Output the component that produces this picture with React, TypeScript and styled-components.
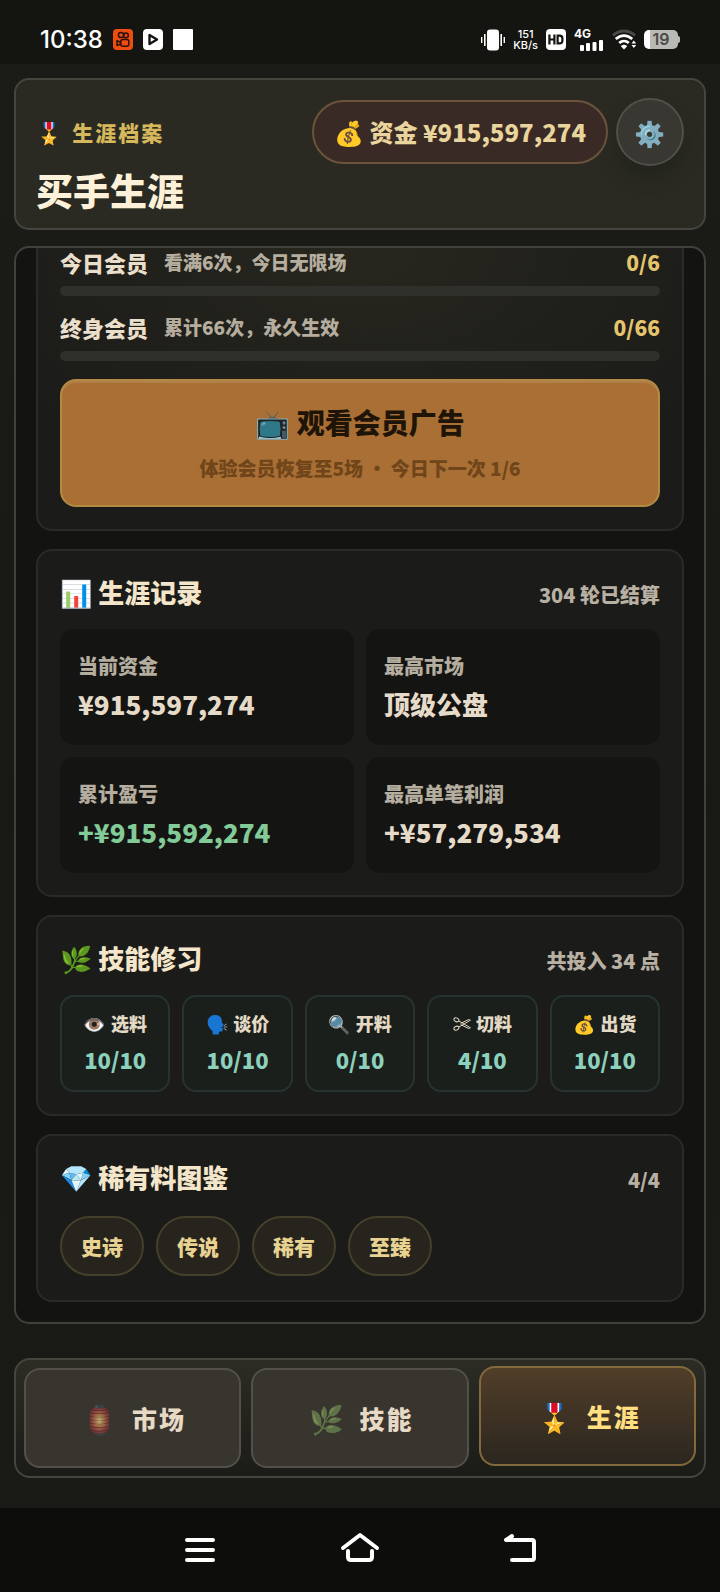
import React from "react";
import styled, { createGlobalStyle, css } from "styled-components";

const GlobalStyle = createGlobalStyle`
  *, *::before, *::after { box-sizing: border-box; }
  body {
    margin: 0;
    background: #191a16;
    color: #e9dfc9;
    font-family: "Noto Sans CJK SC", "Noto Color Emoji", sans-serif;
    font-weight: 900;
  }
  h1, h2, p, dl, dt, dd, ul { margin: 0; padding: 0; }
  h1, h2 { font-weight: 900; }
  button { font: inherit; color: inherit; cursor: pointer; }
`;

const Screen = styled.div`
  min-height: 100vh;
  display: flex;
  flex-direction: column;
  background: linear-gradient(180deg, #1b1b18 0%, #181914 50%, #1a1b17 100%);
`;

/* ---------- system status bar ---------- */

const StatusBar = styled.div`
  display: flex;
  justify-content: space-between;
  align-items: center;
  height: 64px;
  padding: 15px 42px 0 40px;
  background: #141510;
  color: #ffffff;
  font-family: Inter, sans-serif;
  font-weight: 500;
`;

const StatusGroup = styled.div<{ $gap: number }>`
  display: flex;
  align-items: center;
  gap: ${(p) => p.$gap}px;
`;

const Clock = styled.span`
  font-size: 24px;
  line-height: 28px;
`;

const NetSpeed = styled.span`
  display: grid;
  justify-items: center;
  font-size: 11px;
  line-height: 11px;
`;

/* ---------- header ---------- */

const Header = styled.header`
  display: flex;
  justify-content: space-between;
  align-items: flex-start;
  margin: 14px 14px 0;
  padding: 18px 20px 14px;
  border: 2px solid #45453e;
  border-radius: 15px;
  background: #2a2a23;
`;

const Eyebrow = styled.p`
  display: flex;
  align-items: center;
  gap: 8px;
  height: 36px;
  margin-top: 16px;
  color: #d6b85c;
  font-size: 21px;
  line-height: 36px;
  letter-spacing: 2px;
`;

const Title = styled.h1`
  color: #fdf1da;
  font-size: 37px;
  line-height: 48px;
  margin-top: 16px;
`;

const HeaderActions = styled.div`
  display: flex;
  align-items: center;
  gap: 8px;
`;

const Funds = styled.div`
  height: 64px;
  padding: 0 20px;
  border: 2px solid #6b543c;
  border-radius: 32px;
  background: #3a2a25;
  color: #e8d49c;
  font-size: 24px;
  line-height: 60px;
  white-space: nowrap;
`;

const SettingsButton = styled.button`
  display: grid;
  place-items: center;
  width: 68px;
  height: 68px;
  padding: 0;
  border: 2px solid #504f49;
  border-radius: 50%;
  background: #393731;
  box-shadow: 0 12px 20px rgba(0, 0, 0, 0.16);
  font-size: 25px;
  line-height: 28px;
`;

/* ---------- scrolling panel and its cards ---------- */

const Panel = styled.main`
  display: flex;
  flex-direction: column;
  gap: 18px;
  margin: 16px 14px 0;
  padding: 0 20px 20px;
  border: 2px solid #40413a;
  border-radius: 15px;
  overflow: hidden;
  background: #131311;
`;

const Card = styled.section<{ $clipped?: boolean }>`
  padding: 22px;
  border: 2px solid #2a2a28;
  border-radius: 16px;
  background: #1b1b19;
  ${(p) =>
    p.$clipped &&
    css`
      display: grid;
      gap: 18px;
      padding-top: 0;
      border-top: 0;
      border-radius: 0 0 16px 16px;
      background: radial-gradient(ellipse 64% 90% at 50% 0%, #27261e 0%, #1b1b19 100%);
    `}
`;

const CardHead = styled.div`
  display: flex;
  justify-content: space-between;
  align-items: flex-end;
  height: 40px;
  margin-bottom: 16px;
`;

const CardTitle = styled.h2`
  color: #f4e6cb;
  font-size: 26px;
  line-height: 42px;
`;

const CardNote = styled.span`
  color: #b8b0a2;
  font-size: 20px;
  line-height: 36px;
`;

const Goal = styled.div`
  display: grid;
  gap: 11px;
`;

const GoalRow = styled.div`
  display: flex;
  align-items: center;
  gap: 16px;
  height: 26px;
  line-height: 26px;

  ${Goal}:first-child & {
    height: 27px;
  }
`;

const GoalName = styled.span`
  color: #e9dfcb;
  font-size: 22px;
`;

const GoalHint = styled.span`
  flex: 1;
  color: #b5ad9e;
  font-size: 19px;
`;

const GoalCount = styled.span`
  color: #e5c46e;
  font-size: 21px;
`;

const Track = styled.div`
  height: 10px;
  border-radius: 5px;
  background: #2f2f2b;
`;

const AdButton = styled.button`
  display: grid;
  align-content: center;
  justify-items: center;
  gap: 12px;
  width: 100%;
  height: 128px;
  padding: 0 0 3px;
  border: 2px solid #b38a42;
  border-radius: 16px;
  background: #a96f35;
  box-shadow: inset 0 2px 0 #b17f4a;
`;

const AdTitle = styled.span`
  color: #1f1408;
  font-size: 28px;
  line-height: 40px;
`;

const AdHint = styled.span`
  color: #6f4519;
  font-size: 19px;
  line-height: 28px;
`;

const StatGrid = styled.dl`
  display: grid;
  grid-template-columns: 1fr 1fr;
  gap: 12px;
`;

const Stat = styled.div`
  display: grid;
  align-content: start;
  gap: 7px;
  height: 116px;
  padding: 23px 18px 0;
  border-radius: 14px;
  background: #141412;
`;

const StatLabel = styled.dt`
  color: #b5ad9f;
  font-size: 20px;
  line-height: 28px;
`;

const StatValue = styled.dd<{ $gain?: boolean }>`
  color: ${(p) => (p.$gain ? "#82cb98" : "#e5dbc8")};
  font-size: 26px;
  line-height: 34px;
`;

const SkillGrid = styled.dl`
  display: grid;
  grid-template-columns: repeat(5, 1fr);
  gap: 12px;
`;

const Skill = styled.div`
  display: grid;
  align-content: start;
  justify-items: center;
  gap: 7px;
  height: 97px;
  padding-top: 12px;
  border: 2px solid #263330;
  border-radius: 14px;
  background: #1a1f1c;
`;

const SkillName = styled.dt`
  display: flex;
  align-items: center;
  gap: 5px;
  color: #e3d9c5;
  font-size: 18px;
  line-height: 28px;
`;

const SkillLevel = styled.dd`
  color: #8dd0bc;
  font-size: 22px;
  line-height: 30px;
`;

const RarityList = styled.ul`
  display: flex;
  flex-wrap: wrap;
  gap: 12px;
  padding: 2px 0;
  list-style: none;
`;

const Rarity = styled.li`
  height: 60px;
  padding: 0 19px;
  border: 2px solid #45402c;
  border-radius: 30px;
  background: #26241c;
  color: #e9d393;
  font-size: 21px;
  line-height: 56px;
`;

/* ---------- tab bar ---------- */

const TabBar = styled.nav`
  display: grid;
  grid-template-columns: repeat(3, 1fr);
  gap: 10px;
  margin: 34px 14px 30px;
  padding: 8px;
  border: 2px solid #45453e;
  border-radius: 16px;
  background: linear-gradient(180deg, #2c2c25 0%, #1b1b18 100%);
`;

const Tab = styled.button<{ $active?: boolean }>`
  display: flex;
  align-items: center;
  justify-content: center;
  gap: 15px;
  height: 100px;
  padding: 0 0 0 3px;
  border: 2px solid #53504a;
  border-radius: 16px;
  background: #38342e;
  color: #e6dac6;
  font-size: 25px;
  letter-spacing: 2px;
  ${(p) =>
    p.$active &&
    css`
      border-color: #83693b;
      background: linear-gradient(180deg, #513e29 0%, #2b261e 100%);
      color: #ffdf82;
      transform: translateY(-2px);
    `}
`;

const TabIcon = styled.span<{ $dim?: boolean }>`
  font-size: 28px;
  line-height: 34px;
  letter-spacing: 0;
  opacity: ${(p) => (p.$dim ? 0.7 : 1)};
  filter: ${(p) => (p.$dim ? "grayscale(0.5)" : "none")};
`;

/* ---------- system navigation ---------- */

const SystemNav = styled.div`
  display: flex;
  justify-content: center;
  align-items: center;
  gap: 120px;
  height: 84px;
  margin-top: auto;
  background: #0d0d0b;
`;

const SystemButton = styled.button`
  display: grid;
  width: 40px;
  height: 40px;
  padding: 0;
  border: 0;
  background: none;
  color: #ffffff;
`;

const KuaishouIcon = () => (
  <svg width="20" height="21" viewBox="0 0 20 21" fill="none" aria-hidden="true">
    <rect width="20" height="21" rx="4" fill="#ee4d12" />
    <g stroke="#2a1008" strokeWidth="1.5">
      <circle cx="8" cy="6" r="2.6" />
      <circle cx="13" cy="6.4" r="2.3" />
      <rect x="7.8" y="10.6" width="8" height="6.6" rx="2" />
      <path d="M7.6 13.2 4 11.6v5l3.6-1.6" strokeLinejoin="round" />
    </g>
  </svg>
);

const PlayIcon = () => (
  <svg width="20" height="21" viewBox="0 0 20 21" aria-hidden="true">
    <rect width="20" height="21" rx="4" fill="#fff" />
    <path d="M6.500 6v9l7.500-4.500z" fill="none" stroke="#141510" strokeWidth="2.400" strokeLinejoin="round" />
  </svg>
);

const SquareIcon = () => (
  <svg width="20" height="21" viewBox="0 0 20 21" aria-hidden="true">
    <rect width="20" height="21" rx="1" fill="#fff" />
  </svg>
);

const VibrateIcon = () => (
  <svg width="24" height="22" viewBox="0 0 24 22" fill="#fff" aria-hidden="true">
    <rect x="6" y="0.500" width="12" height="21" rx="3" />
    <path d="M3 5h1.600v12H3zM0 8h1.400v6H0zM19.400 5H21v12h-1.600zM22.600 8H24v6h-1.400z" />
  </svg>
);

const HdIcon = () => (
  <svg width="20" height="21" viewBox="0 0 20 21" fill="none" aria-hidden="true">
    <rect width="20" height="21" rx="4" fill="#fff" />
    <path
      d="M3.400 5.500v10M8.400 5.500v10M3.400 10.500h5M11.600 6.600v7.800h2c1.800 0 2.800-1 2.800-2.600V9.200c0-1.600-1-2.600-2.800-2.600z"
      stroke="#141510"
      strokeWidth="2.200"
    />
  </svg>
);

const SignalLabel = styled.span`
  display: grid;
  font-size: 12px;
  line-height: 10px;
  font-weight: 700;
`;

const SignalBars = () => (
  <svg width="30" height="12" viewBox="0 0 30 12" fill="#fff" aria-hidden="true">
    <rect x="6" y="6" width="4" height="6" rx="1" />
    <rect x="12" y="4" width="4" height="8" rx="1" />
    <rect x="18.500" y="3" width="4" height="9" rx="1" />
    <rect x="25" y="1" width="4" height="11" rx="1" />
  </svg>
);

const WifiIcon = () => (
  <svg width="24" height="21" viewBox="0 0 24 21" fill="none" strokeWidth="2.800" aria-hidden="true">
    <path d="M1 6.500C7.500.500 16.500.500 23 6.500" stroke="#4a4a47" />
    <path d="M3.800 10C8.800 5.400 15.200 5.400 20.200 10" stroke="#fff" />
    <path d="M7.200 14C10 11.400 14 11.400 16.800 14" stroke="#fff" />
    <path d="M8.800 17.200c1.800-1.800 4.600-1.800 6.400 0L12 20.500z" fill="#fff" />
    <path d="M19.500 14.500l2.300-3 2.300 3zM19.500 16l2.300 3 2.300-3z" fill="#fff" />
  </svg>
);

const Battery = styled.span`
  display: block;
  position: relative;
  width: 34px;
  height: 19px;
  border-radius: 5px;
  background: linear-gradient(90deg, #ffffff 19%, #b9b9b6 19%);
  color: #4a4a47;
  font-size: 16px;
  line-height: 19px;
  font-weight: 600;
  text-align: center;
  &::after {
    content: "";
    position: absolute;
    right: -2px;
    top: 6px;
    width: 2px;
    height: 7px;
    border-radius: 0 2px 2px 0;
    background: #b9b9b6;
  }
`;

const ScissorsIcon = () => (
  <svg width="18" height="14" viewBox="0 0 18 14" fill="none" stroke="#e3d9c5" strokeWidth="1" aria-hidden="true">
    <ellipse cx="3.400" cy="2.800" rx="2.600" ry="1.800" transform="rotate(25 3.4 2.8)" />
    <ellipse cx="3.400" cy="11.200" rx="2.600" ry="1.800" transform="rotate(-25 3.4 11.2)" />
    <path d="M5.600 3.800 17.400 10.800 15.500 11.400 7.600 7.600M5.600 10.200 17.400 3.200 15.500 2.600 7.600 6.400" strokeLinejoin="round" />
  </svg>
);

const goals = [
  { name: "今日会员", hint: "看满6次，今日无限场", value: 0, max: 6 },
  { name: "终身会员", hint: "累计66次，永久生效", value: 0, max: 66 },
];

const stats = [
  { label: "当前资金", value: "¥915,597,274" },
  { label: "最高市场", value: "顶级公盘" },
  { label: "累计盈亏", value: "+¥915,592,274", gain: true },
  { label: "最高单笔利润", value: "+¥57,279,534" },
];

const skills: { icon: React.ReactNode; name: string; level: number }[] = [
  { icon: "👁️", name: "选料", level: 10 },
  { icon: "🗣️", name: "谈价", level: 10 },
  { icon: "🔍", name: "开料", level: 0 },
  { icon: <ScissorsIcon />, name: "切料", level: 4 },
  { icon: "💰", name: "出货", level: 10 },
];

const rarities = ["史诗", "传说", "稀有", "至臻"];

const tabs = [
  { icon: "🏮", name: "市场" },
  { icon: "🌿", name: "技能" },
  { icon: "🎖️", name: "生涯", active: true },
];

export default function App() {
  return (
    <Screen>
      <GlobalStyle />
      <StatusBar>
        <StatusGroup $gap={10}>
          <Clock>10:38</Clock>
          <KuaishouIcon />
          <PlayIcon />
          <SquareIcon />
        </StatusGroup>
        <StatusGroup $gap={8}>
          <VibrateIcon />
          <NetSpeed>
            <span>151</span>
            <span>KB/s</span>
          </NetSpeed>
          <HdIcon />
          <SignalLabel>
            4G
            <SignalBars />
          </SignalLabel>
          <WifiIcon />
          <Battery>19</Battery>
        </StatusGroup>
      </StatusBar>

      <Header>
        <div>
          <Eyebrow>
            <span>🎖️</span>
            <span>生涯档案</span>
          </Eyebrow>
          <Title>买手生涯</Title>
        </div>
        <HeaderActions>
          <Funds>💰 资金 ¥915,597,274</Funds>
          <SettingsButton aria-label="设置">⚙️</SettingsButton>
        </HeaderActions>
      </Header>

      <Panel>
        <Card $clipped>
          {goals.map((g) => (
            <Goal key={g.name}>
              <GoalRow>
                <GoalName>{g.name}</GoalName>
                <GoalHint>{g.hint}</GoalHint>
                <GoalCount>{`${g.value}/${g.max}`}</GoalCount>
              </GoalRow>
              <Track role="progressbar" aria-label={g.name} aria-valuenow={g.value} aria-valuemax={g.max} />
            </Goal>
          ))}
          <AdButton>
            <AdTitle>📺 观看会员广告</AdTitle>
            <AdHint>体验会员恢复至5场 · 今日下一次 1/6</AdHint>
          </AdButton>
        </Card>

        <Card>
          <CardHead>
            <CardTitle>📊 生涯记录</CardTitle>
            <CardNote>304 轮已结算</CardNote>
          </CardHead>
          <StatGrid>
            {stats.map((s) => (
              <Stat key={s.label}>
                <StatLabel>{s.label}</StatLabel>
                <StatValue $gain={s.gain}>{s.value}</StatValue>
              </Stat>
            ))}
          </StatGrid>
        </Card>

        <Card>
          <CardHead>
            <CardTitle>🌿 技能修习</CardTitle>
            <CardNote>共投入 34 点</CardNote>
          </CardHead>
          <SkillGrid>
            {skills.map((s) => (
              <Skill key={s.name}>
                <SkillName>
                  <span>{s.icon}</span>
                  <span>{s.name}</span>
                </SkillName>
                <SkillLevel>{`${s.level}/10`}</SkillLevel>
              </Skill>
            ))}
          </SkillGrid>
        </Card>

        <Card>
          <CardHead>
            <CardTitle>💎 稀有料图鉴</CardTitle>
            <CardNote>4/4</CardNote>
          </CardHead>
          <RarityList>
            {rarities.map((r) => (
              <Rarity key={r}>{r}</Rarity>
            ))}
          </RarityList>
        </Card>
      </Panel>

      <TabBar>
        {tabs.map((t) => (
          <Tab key={t.name} $active={t.active} aria-current={t.active ? "page" : undefined}>
            <TabIcon $dim={!t.active}>{t.icon}</TabIcon>
            <span>{t.name}</span>
          </Tab>
        ))}
      </TabBar>

      <SystemNav>
        <SystemButton aria-label="最近任务">
          <svg width="40" height="40" viewBox="0 0 40 40" fill="none" stroke="currentColor" strokeWidth="4" strokeLinecap="round">
            <path d="M7 10h26M7 20h26M7 30h26" />
          </svg>
        </SystemButton>
        <SystemButton aria-label="主屏幕">
          <svg width="40" height="40" viewBox="0 0 40 40" fill="none" stroke="currentColor" strokeWidth="4" strokeLinecap="round" strokeLinejoin="round">
            <path d="M3 18 20 5l17 13" />
            <path d="M8 21v6q0 3 3 3h18q3 0 3-3v-6" />
          </svg>
        </SystemButton>
        <SystemButton aria-label="返回">
          <svg width="40" height="40" viewBox="0 0 40 40" fill="none" stroke="currentColor" strokeWidth="4" strokeLinecap="round" strokeLinejoin="round">
            <path d="M12 6 6 10h26q2 0 2 2v16q0 2-2 2H12" />
          </svg>
        </SystemButton>
      </SystemNav>
    </Screen>
  );
}
